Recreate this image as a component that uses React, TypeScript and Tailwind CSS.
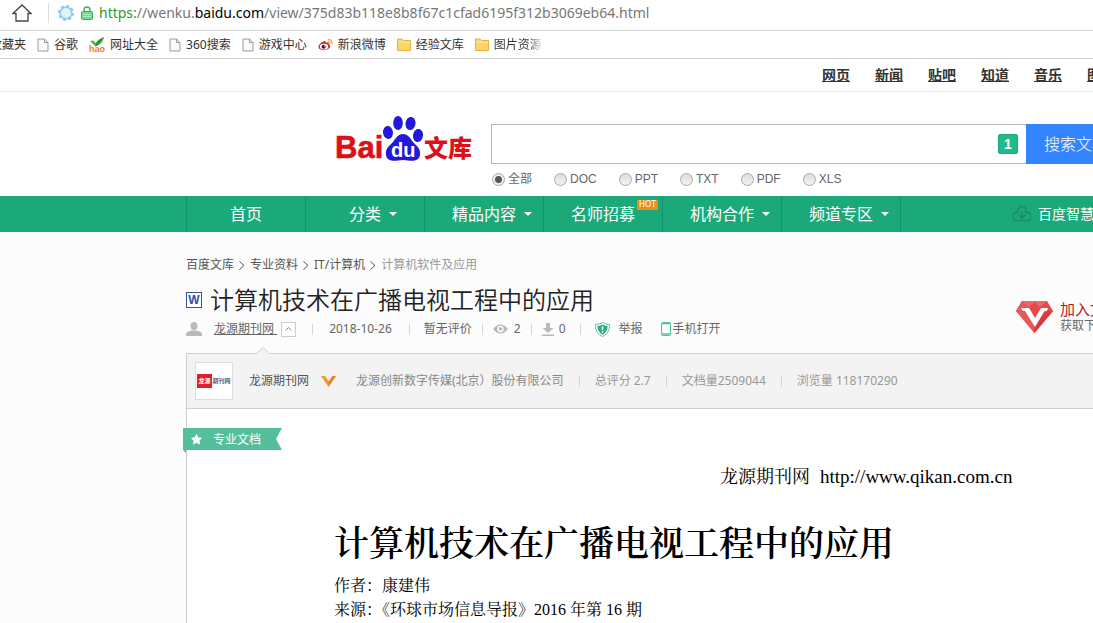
import type { ReactNode } from 'react';
import { Star } from 'lucide-react';

const bookmarks = [
  { label: '收藏夹', icon: null },
  { label: '谷歌', icon: 'file' },
  { label: '网址大全', icon: 'hao' },
  { label: '360搜索', icon: 'file' },
  { label: '游戏中心', icon: 'file' },
  { label: '新浪微博', icon: 'weibo' },
  { label: '经验文库', icon: 'folder' },
  { label: '图片资源', icon: 'folder' },
];

const products = ['网页', '新闻', '贴吧', '知道', '音乐', '图片'];
const formats = ['全部', 'DOC', 'PPT', 'TXT', 'PDF', 'XLS'];

const channels = [
  { label: '首页' },
  { label: '分类', menu: true },
  { label: '精品内容', menu: true },
  { label: '名师招募', hot: true },
  { label: '机构合作', menu: true },
  { label: '频道专区', menu: true },
];

const BookmarkIcon = ({ name }: { name: string }) => {
  if (name === 'hao') {
    return (
      <svg width="16" height="16" viewBox="0 0 16 16" className="shrink-0">
        <path d="M1 4 L4.5 3.5 L7 6 Q10 2 15 0 Q14.500 5 9 8.500 L6.500 9.500 Z" fill="#5cb83c" />
        <path d="M7 6 Q10 2 15 0 Q12.500 5 6.500 9.500 Z" fill="#2f8f2f" />
        <text x="0" y="15" fontSize="9" fontWeight="bold" fill="#f07a28" fontFamily="Liberation Sans, sans-serif">hao</text>
      </svg>
    );
  }
  if (name === 'weibo') {
    return (
      <svg width="15" height="14" viewBox="0 0 17 14" className="shrink-0">
        <path d="M6 3 Q9 1.5 9 4.5 Q13 3 12.5 6.5 Q15 8 13 10.5 Q10 13.5 5.5 13 Q0.5 12 0.5 9 Q1 5.5 6 3Z" fill="#d8202c" />
        <ellipse cx="6.8" cy="8.9" rx="4.8" ry="3.2" fill="#fff" />
        <circle cx="6.4" cy="9" r="2.3" fill="#222" />
        <circle cx="7.2" cy="8.2" r="0.7" fill="#fff" />
        <path d="M11 1 Q16 0 16 6 M11 3.2 Q14 3 13.8 5.5" fill="none" stroke="#f6a02c" strokeWidth="1.3" />
      </svg>
    );
  }
  if (name === 'folder') {
    return (
      <svg width="14" height="13" viewBox="0 0 14 13" className="shrink-0">
        <path d="M0.5 1 H5 L6.5 2.5 H13.5 V12.5 H0.5 Z" fill="#fbd568" stroke="#e5b23c" />
        <path d="M1 4 H13" stroke="#fdeaa8" />
      </svg>
    );
  }
  return (
    <svg width="12" height="14" viewBox="0 0 12 14" className="shrink-0">
      <path d="M1 1 H7.5 L11 4.5 V13 H1 Z M7.5 1 V4.5 H11" fill="#fafafa" stroke="#9a9a9a" />
    </svg>
  );
};

const BrowserBar = () => (
  <div className="bg-white">
    <div className="flex h-[31px] items-center border-b border-[#d4d4d4] pb-1 pl-3">
      <svg width="20" height="18" viewBox="0 0 20 18" fill="none" stroke="#444" strokeWidth="1.3" className="shrink-0">
        <path d="M1 9.5 L10 1 L19 9.5 H16 V17 H4 V9.5 Z" />
      </svg>
      <span className="ml-4 h-5 w-px bg-[#ddd]" />
      <svg width="18" height="18" viewBox="0 0 18 18" className="ml-2 shrink-0">
        <circle cx="9" cy="9" r="7" fill="none" stroke="#8cc8ec" strokeWidth="2" strokeDasharray="3 2.5" />
        <circle cx="9" cy="9" r="5.8" fill="#e2f3fc" stroke="#8ecbf0" strokeWidth="1.5" />
      </svg>
      <svg width="12" height="14" viewBox="0 0 12 14" className="ml-[6px] shrink-0">
        <path d="M3 6 V4 Q3 1 6 1 Q9 1 9 4 V6" fill="none" stroke="#3fae62" strokeWidth="1.4" />
        <rect x="0.5" y="5.5" width="11" height="8" rx="1" fill="#6fdc92" stroke="#3fae62" />
        <path d="M2 8.5 H10 M2 10.5 H10" stroke="#a5efbc" />
      </svg>
      <p className="ml-[6px] text-sm text-[#777]">
        <span className="text-[#2c9a2c]">https:</span>//wenku.<span className="text-black">baidu.com</span>
        /view/375d83b118e8b8f67c1cfad6195f312b3069eb64.html
      </p>
    </div>
    <div className="flex h-7 items-center border-b border-[#d4d4d4]">
      <nav className="-ml-[10px] flex items-center gap-[11px] text-xs text-[#333]">
        {bookmarks.map((item, i) => (
          <a
            key={item.label}
            href="#"
            className={`flex items-center gap-[5px] ${i === bookmarks.length - 1 ? 'bg-linear-to-r from-[#333] from-80% to-[#eee] bg-clip-text text-transparent' : ''}`}
          >
            {item.icon && <BookmarkIcon name={item.icon} />}
            {item.label}
          </a>
        ))}
      </nav>
    </div>
  </div>
);

const Logo = () => (
  <svg width="138" height="48" viewBox="0 0 138 48" role="img" aria-label="Baidu 文库" className="shrink-0">
    <g fill="#2319dc">
      <ellipse cx="53" cy="16.500" rx="5" ry="6.500" transform="rotate(-8 53 16.500)" />
      <ellipse cx="63" cy="7" rx="4.800" ry="7" />
      <ellipse cx="75.500" cy="7.500" rx="5" ry="6.500" transform="rotate(10 75.500 7.500)" />
      <ellipse cx="83" cy="19.500" rx="5" ry="6.500" transform="rotate(10 83 19.500)" />
      <path d="M68 18 C73 18 75 22 78 26 C82 30 86 33 85 39 C84 46 77 45 68 44 C59 45 52 46 51 39 C50 33 54 30 58 26 C61 22 63 18 68 18Z" />
    </g>
    <text x="0" y="42" fontSize="31" fontWeight="bold" fill="#de0f17" stroke="#de0f17" strokeWidth="0.6" fontFamily="Liberation Sans, sans-serif">Bai</text>
    <text x="56" y="41" fontSize="20" fontWeight="bold" fill="#fff" fontFamily="Liberation Sans, sans-serif">du</text>
    <text x="89" y="41" fontSize="24" fontWeight="900" fill="#de0f17" fontFamily="Noto Sans CJK SC, sans-serif">文库</text>
  </svg>
);

const SearchHeader = () => (
  <header className="bg-white">
    <nav className="flex h-[33px] items-center gap-[25px] border-b border-[#e8e8e8] pl-[822px] text-sm font-bold text-[#333]">
      {products.map((name) => (
        <a key={name} href="#" className="shrink-0 underline">{name}</a>
      ))}
    </nav>
    <div className="flex h-[104px] items-start pl-[335px]">
      <div className="pt-6">
        <Logo />
      </div>
      <form className="ml-[18px] grow pt-8" onSubmit={(e) => e.preventDefault()}>
        <div className="flex">
          <div className="flex h-10 w-[535px] shrink-0 items-center border border-r-0 border-[#b6b6b6] pr-2">
            <input type="text" aria-label="搜索文档" className="h-full grow px-2 text-base outline-none" />
            <span className="flex size-5 items-center justify-center rounded-xs border border-[#17a877] bg-[#22b98b] font-['Liberation_Sans',sans-serif] text-sm font-bold text-white">1</span>
          </div>
          <button type="submit" className="h-10 w-[100px] shrink-0 bg-[#3385ff] text-base font-light text-white">搜索文档</button>
        </div>
        <div className="mt-[7px] flex gap-[22px] pl-px font-['Liberation_Sans','Noto_Sans_CJK_SC',sans-serif] text-xs text-[#666]">
          {formats.map((name, i) => (
            <label key={name} className="flex items-center gap-[3px]">
              <input
                type="radio"
                name="format"
                defaultChecked={i === 0}
                className="size-[13px] appearance-none rounded-full border border-[#aaa] bg-linear-to-b from-[#ddd] to-[#f2f2f2] checked:bg-[radial-gradient(circle,#555_0_3px,#eee_4px)]"
              />
              {name}
            </label>
          ))}
        </div>
      </form>
    </div>
  </header>
);

const ChannelNav = () => (
  <nav className="flex h-9 bg-[#1ba97a] pl-[186px] text-white">
    <ul className="flex border-l border-[#14936a]">
      {channels.map(({ label, menu, hot }) => (
        <li key={label} className="relative w-[119px] border-r border-[#14936a]">
          <a href="#" className={`flex h-full items-center justify-center gap-2 text-base ${menu ? 'pl-4' : ''}`}>
            {label}
            {menu && (
              <svg width="8" height="4" viewBox="0 0 8 4" fill="currentColor">
                <path d="M0 0 H8 L4 4 Z" />
              </svg>
            )}
          </a>
          {hot && (
            <span className="absolute top-1 right-1 flex h-[10px] w-[21px] items-center justify-center bg-[#f08a24] font-['DejaVu_Sans',sans-serif] text-[8px] text-white">
              HOT
            </span>
          )}
        </li>
      ))}
    </ul>
    <a href="#" className="ml-28 flex shrink-0 items-center gap-[7px] text-sm">
      <svg width="18" height="16" viewBox="0 0 18 16" fill="none" stroke="#16895f" strokeWidth="1.2">
        <path d="M5.200 6.500 A4.200 4.200 0 1 1 12.800 6.500 A4.200 4.200 0 1 1 12.500 14.500 H5.500 A4.200 4.200 0 1 1 5.200 6.500" />
        <path d="M9 6 V15 M9 12 L5.500 9 M9 12 L12.500 9" />
      </svg>
      百度智慧课堂
    </a>
  </nav>
);

const Chevron = () => (
  <svg width="6" height="9" viewBox="0 0 6 9" fill="none" stroke="#555" className="mx-[5px]">
    <path d="M0.500 0.500 L5 4.500 L0.500 8.500" />
  </svg>
);

const Divider = ({ className }: { className: string }) => <span className={`h-[11px] w-px bg-[#d5d5d5] ${className}`} />;

const DocumentMeta = () => (
  <div className="flex h-[22px] items-center text-xs text-[#666]">
    <svg width="16" height="14" viewBox="0 0 16 14" fill="#b9b9b9">
      <ellipse cx="8" cy="4" rx="3.500" ry="4" />
      <path d="M0 14 V11.500 Q1 9.500 6 8.500 H10 Q15 9.500 16 11.500 V14 Z" />
    </svg>
    <a href="#" className="ml-3 underline">龙源期刊网&nbsp;</a>
    <button type="button" aria-label="收起" className="ml-1 flex size-[15px] items-center justify-center border border-[#ccc] bg-white">
      <svg width="7" height="4" viewBox="0 0 7 4" fill="none" stroke="#888"><path d="M0.500 3.500 L3.500 0.500 L6.500 3.500" /></svg>
    </button>
    <Divider className="mx-4" />
    <span>2018-10-26</span>
    <Divider className="mr-[14px] ml-[17px]" />
    <span>暂无评价</span>
    <Divider className="mx-[10px]" />
    <svg width="15" height="10" viewBox="0 0 15 10" className="mr-[6px]">
      <path d="M0 5 Q7.500 -4 15 5 Q7.500 14 0 5Z" fill="#b9b9b9" />
      <circle cx="7.500" cy="5" r="3.200" fill="#fff" />
      <circle cx="7.500" cy="5" r="1.800" fill="#b9b9b9" />
    </svg>
    <span>2</span>
    <Divider className="mx-[10px]" />
    <svg width="12" height="13" viewBox="0 0 12 13" className="mr-[5px]" fill="#b9b9b9">
      <path d="M4 0 H8 V5 H11.500 L6 10 L0.500 5 H4 Z M0 11.500 H12 V13 H0 Z" />
    </svg>
    <span>0</span>
    <Divider className="mx-[14px]" />
    <svg width="15" height="15" viewBox="0 0 15 15" className="mr-[9px]">
      <path d="M7.500 0.500 Q10 2.200 14.500 2.500 Q15 11 7.500 14.500 Q0 11 0.500 2.500 Q5 2.200 7.500 0.500Z" fill="#fff" stroke="#5cc2a0" />
      <path d="M7.500 2.500 Q9.500 3.800 12.700 4 Q12.500 10 7.500 12.700 Q2.500 10 2.300 4 Q5.500 3.800 7.500 2.500Z" fill="#2fac83" />
      <path d="M7.500 4.500 V8.500 M7.500 9.500 V11" stroke="#fff" strokeWidth="1.500" />
    </svg>
    <a href="#">举报</a>
    <svg width="10" height="14" viewBox="0 0 10 14" className="mr-[2px] ml-[18px]" fill="none" stroke="#54c09d">
      <rect x="0.500" y="0.500" width="9" height="13" rx="1" />
      <path d="M1 1.500 H9 M1 12 H9" strokeWidth="1.500" />
    </svg>
    <a href="#">手机打开</a>
  </div>
);

const Stat = ({ children }: { children: ReactNode }) => (
  <>
    <Divider className="mx-[15px]" />
    <span>{children}</span>
  </>
);

const PublisherPanel = () => (
  <section className="relative flex h-14 items-center border-y border-l border-[#d0d0d0] bg-[#f3f3f3] pl-2 text-xs text-[#999]">
    <svg width="14" height="8" viewBox="0 0 14 8" className="absolute -top-[7px] left-[69px]">
      <path d="M0 7 L7 0.500 L14 7 V8 H0 Z" fill="#f3f3f3" />
      <path d="M0 7 L7 0.500 L14 7" fill="none" stroke="#d0d0d0" />
    </svg>
    <div className="flex size-[38px] items-center justify-center border border-[#ddd] bg-white text-[6px] font-bold">
      <span className="bg-[#e01f2b] px-px leading-[14px] text-white">龙源</span>
      <span className="pl-px leading-[14px] text-[#667]">期刊网</span>
    </div>
    <a href="#" className="ml-4 text-[#555]">龙源期刊网</a>
    <svg width="15" height="11" viewBox="0 0 15 11" className="mr-5 ml-3">
      <path d="M0 0 H4 L8 6 L7.500 11 Z" fill="#f59a2c" />
      <path d="M15 0 H11.500 L7 6.500 L7.500 11 Z" fill="#ef7d1a" />
    </svg>
    <span className="text-[#888]">龙源创新数字传媒(北京）股份有限公司</span>
    <Stat>总评分 2.7</Stat>
    <Stat>文档量2509044</Stat>
    <Stat>浏览量 118170290</Stat>
  </section>
);

const DocumentHeader = () => (
  <div className="flex h-[121px]">
    <div className="w-[830px] shrink-0 pt-6">
      <nav className="flex h-[18px] items-center text-xs text-[#555]">
        <a href="#">百度文库</a>
        <Chevron />
        <a href="#">专业资料</a>
        <Chevron />
        <a href="#">IT/计算机</a>
        <Chevron />
        <span className="text-[#999]">计算机软件及应用</span>
      </nav>
      <h1 className="mt-2 flex h-9 items-center gap-2 text-2xl font-[350] text-[#222]">
        <span className="flex size-4 items-center justify-center border border-[#35549c] bg-white font-['Liberation_Sans',sans-serif] text-xs font-bold text-[#2b4fa8]">W</span>
        计算机技术在广播电视工程中的应用
      </h1>
      <DocumentMeta />
    </div>
    <a href="#" className="mb-4 flex h-10 shrink-0 items-center gap-[7px] self-end">
      <svg width="37" height="32" viewBox="0 0 37 32">
        <path d="M6 0 H31 L37 10 L18.500 32 L0 10 Z" fill="#e4494c" />
        <path d="M6 0 H31 L24 6 L18.500 1 L13 6 Z" fill="#e96a69" />
        <path d="M0 10 L6 0 L13 6 L18.500 14 V32 Z" fill="#ea5757" />
        <path d="M37 10 L18.500 32 V24 L31 10 Z" fill="#d8383e" />
        <path d="M5 7 H13 L19 17 L25 7 H32 L31 10 H28.500 L19 26 L9 10 H6.500 Z" fill="#fff" />
      </svg>
      <span className="flex flex-col">
        <span className="text-[15px] leading-[18px] text-[#b01c1c]">加入文库VIP</span>
        <span className="text-xs leading-4 text-[#666]">获取下载特权</span>
      </span>
    </a>
  </div>
);

const Article = () => (
  <article className="relative grow border-l border-[#ccc] bg-white font-['Liberation_Serif','Noto_Serif_CJK_SC','Noto_Sans_CJK_SC',serif] text-black">
    <div className="absolute top-[19px] -left-1 h-[25px] w-[99px] bg-[#55bf9c] [clip-path:polygon(0_0,100%_0,94%_11px,100%_22px,3px_22px,3px_100%,0_22px)]">
      <span className="flex h-[22px] items-center gap-[10px] pl-[7px] font-['Noto_Sans_CJK_SC',sans-serif] text-xs text-white">
        <Star size={13} fill="currentColor" strokeWidth={0} />
        专业文档
      </span>
    </div>
    <p className="flex items-center gap-[10px] pt-14 pl-[533px] leading-6">
      <span className="text-lg leading-6">龙源期刊网</span>
      <a href="#" className="text-[19px] leading-6">http://www.qikan.com.cn</a>
    </p>
    <div className="pl-[147px]">
      <h2 className="mt-7 text-[35px] leading-[56px] font-semibold">计算机技术在广播电视工程中的应用</h2>
      <div className="mt-px text-base leading-6">
        <p>作者：康建伟</p>
        <p>来源：《环球市场信息导报》2016 年第 16 期</p>
      </div>
    </div>
  </article>
);

export default function App() {
  return (
    <div className="flex min-h-screen flex-col overflow-hidden bg-[#fcfcfc] font-['Noto_Sans','Noto_Sans_CJK_SC',sans-serif] whitespace-nowrap">
      <BrowserBar />
      <SearchHeader />
      <ChannelNav />
      <main className="flex grow flex-col pl-[186px]">
        <DocumentHeader />
        <PublisherPanel />
        <Article />
      </main>
    </div>
  );
}
